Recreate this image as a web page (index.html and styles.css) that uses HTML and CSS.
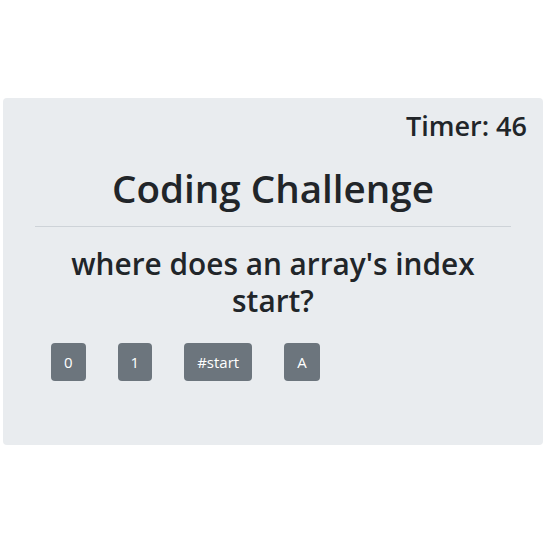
FILE: index.html
```html
<!DOCTYPE html>
<html>
<head>
<meta charset="utf-8">
<link rel="stylesheet" href="styles.css">
</head>
<body>
<div class="page">
  <div class="jumbotron">
    <div class="timer">Timer: 46</div>
    <div class="inner">
      <h1 class="title">Coding Challenge</h1>
      <hr class="rule">
      <h2 class="question">where does an array's index start?</h2>
      <div class="answers">
        <button class="btn">0</button>
        <button class="btn">1</button>
        <button class="btn">#start</button>
        <button class="btn">A</button>
      </div>
    </div>
  </div>
</div>
</body>
</html>
```

FILE: styles.css
```css
html, body {
  margin: 0;
  padding: 0;
  background: #fff;
}
body {
  font-family: "Open Sans", "Noto Sans", sans-serif;
  color: #212529;
}
.page {
  padding: 98px 3px 0 3px;
}
.jumbotron {
  background: #e9ecef;
  border-radius: 4px;
  height: 347px;
  box-sizing: border-box;
  padding: 8px 16px 0 32px;
}
.timer {
  text-align: right;
  font-size: 27px;
  line-height: 40px;
  font-weight: 600;
}
.inner {
  padding-right: 16px;
}
.title {
  margin: 18px 0 0 0;
  text-align: center;
  font-size: 38.6px;
  font-weight: 600;
  line-height: 48px;
}
.rule {
  margin: 14px 0 0 0;
  border: 0;
  border-top: 1px solid #ced3d8;
}
.question {
  margin: 18px 0 0 0;
  text-align: center;
  font-size: 29.8px;
  font-weight: 600;
  line-height: 37px;
}
.answers {
  display: flex;
  gap: 32px;
  margin-top: 24px;
  padding-left: 16px;
}
.btn {
  font-family: inherit;
  background: #6c757d;
  color: #fff;
  border: 0;
  border-radius: 4px;
  height: 38px;
  padding: 0 13px;
  font-size: 15px;
}
```
